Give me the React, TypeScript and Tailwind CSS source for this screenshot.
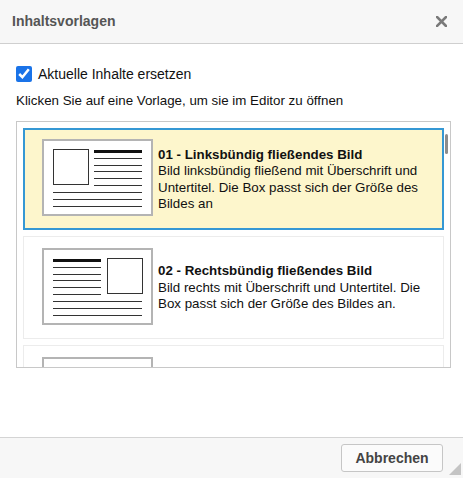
import { useState } from 'react';

type Template = { id: string; title: string; description: string; layout: 'left' | 'right' | 'full' };

const templates: Template[] = [
  {
    id: '01',
    title: '01 - Linksbündig fließendes Bild',
    description: 'Bild linksbündig fließend mit Überschrift und Untertitel. Die Box passt sich der Größe des Bildes an',
    layout: 'left',
  },
  {
    id: '02',
    title: '02 - Rechtsbündig fließendes Bild',
    description: 'Bild rechts mit Überschrift und Untertitel. Die Box passt sich der Größe des Bildes an.',
    layout: 'right',
  },
  // third template is only partly visible (scrolled), its text is below the fold
  { id: '03', title: '', description: '', layout: 'full' },
];

function Thumb({ layout }: { layout: Template['layout'] }) {
  const thin = [19, 26, 32, 39, 46];
  const lineX = layout === 'left' ? 52 : 11;
  const squareX = layout === 'left' ? 11.5 : 65.5;
  return (
    <svg width="111" height="77" viewBox="0 0 111 77" className="shrink-0">
      <rect x="1" y="1" width="109" height="75" fill="#fff" stroke="#b4b4b4" strokeWidth="2" />
      {layout !== 'full' && (
        <>
          <rect x={squareX} y="10.5" width="35" height="35" fill="none" stroke="#333" />
          <rect x={lineX} y="11" width="48" height="3" fill="#111" />
          {thin.map(y => (
            <rect key={y} x={lineX} y={y} width="48" height="1" fill="#333" />
          ))}
          {[53, 60, 67].map(y => (
            <rect key={y} x="11" y={y} width="89" height="1" fill="#333" />
          ))}
        </>
      )}
    </svg>
  );
}

export default function App() {
  const [replace, setReplace] = useState(true);
  const [selected, setSelected] = useState('01');

  return (
    <div
      className="w-[463px] h-[478px] flex flex-col bg-white text-[#111] overflow-hidden"
      style={{ fontFamily: '"Liberation Sans", Arial, sans-serif' }}
    >
      {/* Header */}
      <div className="h-[44px] shrink-0 flex items-center justify-between pl-3 pr-4 bg-[#f7f7f7] border-b border-[#cfcfcf]">
        <span className="text-[14px] font-bold text-[#555]">Inhaltsvorlagen</span>
        <button className="w-[12px] h-[12px] flex items-center justify-center" aria-label="Schließen">
          <svg width="11" height="11" viewBox="0 0 11 11">
            <path d="M1 1 L10 10 M10 1 L1 10" stroke="#7a7a7a" strokeWidth="2.6" strokeLinecap="square" />
          </svg>
        </button>
      </div>

      {/* Body */}
      <div className="flex-1 pl-4 pr-3">
        <label className="mt-[22px] h-4 flex items-center gap-[6px] text-[14px] leading-4 cursor-pointer">
          <input
            type="checkbox"
            checked={replace}
            onChange={e => setReplace(e.target.checked)}
            className="w-4 h-4 m-0 accent-[#1a73e8]"
          />
          Aktuelle Inhalte ersetzen
        </label>
        <p className="mt-[11px] text-[13.33px] leading-4">Klicken Sie auf eine Vorlage, um sie im Editor zu öffnen</p>

        {/* Template list */}
        <div className="relative mt-[12px] h-[247px] border border-[#c8c8c8] overflow-hidden">
          <div className="p-[6px] flex flex-col gap-[6px]">
            {templates.map(t => {
              const active = t.id === selected;
              return (
                <div
                  key={t.id}
                  onClick={() => setSelected(t.id)}
                  className={
                    active
                      ? 'h-[102px] shrink-0 flex items-center gap-[5px] pl-[17px] pr-[8px] border-2 border-[#3598d4] bg-[#fdf6cc] cursor-pointer'
                      : 'h-[103px] shrink-0 flex items-center gap-[5px] pl-[18px] pr-[9px] border border-[#ececec] bg-white cursor-pointer'
                  }
                >
                  <div className="-mt-[3px]">
                    <Thumb layout={t.layout} />
                  </div>
                  {t.title && (
                    <div className="flex-1 text-[13.33px] leading-[16.5px] mt-[1px]">
                      <div className="font-bold">{t.title}</div>
                      <div>{t.description}</div>
                    </div>
                  )}
                </div>
              );
            })}
          </div>
          {/* scrollbar thumb */}
          <div className="absolute right-[2px] top-[12px] w-[3px] h-[20px] rounded-sm bg-[#8c8c8c]" />
        </div>
      </div>

      {/* Footer */}
      <div className="relative h-[41px] shrink-0 flex items-center justify-end pr-5 bg-[#f7f7f7] border-t border-[#d4d4d4]">
        <button className="w-[102px] h-[28px] rounded-[3px] border border-[#c6c6c6] bg-[#fbfbfb] text-[14px] font-bold text-[#444]">
          Abbrechen
        </button>
        <svg width="12" height="12" viewBox="0 0 12 12" className="absolute right-[2px] bottom-[3px]">
          <path d="M12 0 L12 12 L0 12 Z" fill="#c4c4c4" />
        </svg>
      </div>
    </div>
  );
}
